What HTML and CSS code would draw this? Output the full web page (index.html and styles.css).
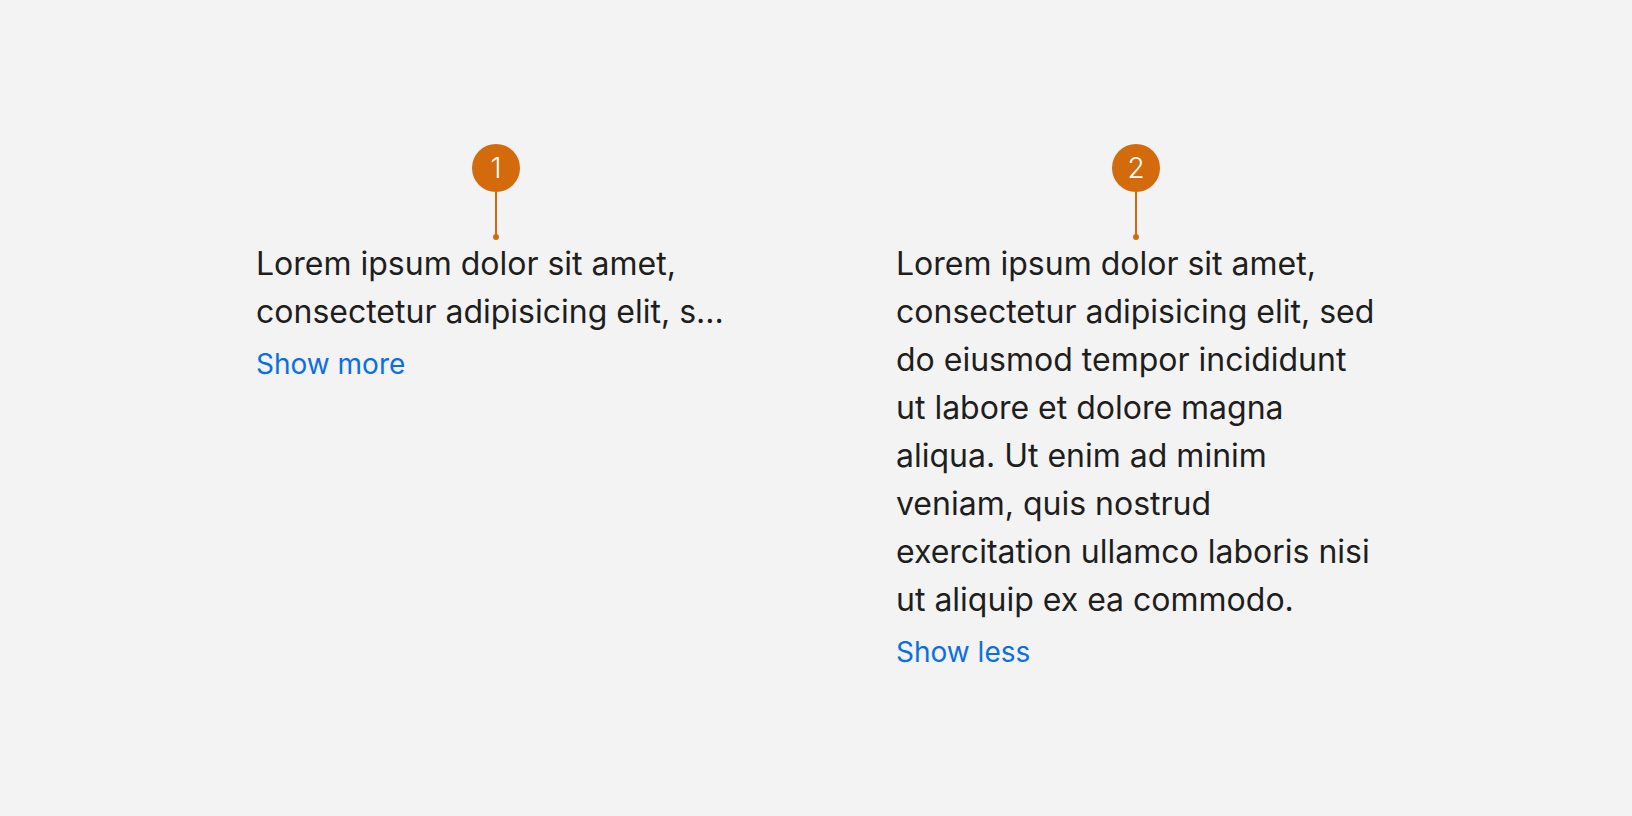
FILE: index.html
```html
<!DOCTYPE html>
<html lang="en">
<head>
<meta charset="utf-8">
<title>Show more / Show less</title>
<link rel="stylesheet" href="styles.css">
</head>
<body>
<main class="stage">
  <section class="example">
    <div class="marker">
      <span class="badge">1</span>
      <span class="stem"></span>
      <span class="dot"></span>
    </div>
    <p class="text">Lorem ipsum dolor sit amet,<br>consectetur adipisicing elit, s...</p>
    <a class="toggle" href="#">Show more</a>
  </section>
  <section class="example">
    <div class="marker">
      <span class="badge">2</span>
      <span class="stem"></span>
      <span class="dot"></span>
    </div>
    <p class="text">Lorem ipsum dolor sit amet, consectetur adipisicing elit, sed do eiusmod tempor incididunt ut labore et dolore magna aliqua. Ut enim ad minim veniam, quis nostrud exercitation ullamco laboris nisi ut aliquip ex ea commodo.</p>
    <a class="toggle" href="#">Show less</a>
  </section>
</main>
</body>
</html>
```

FILE: styles.css
```css
html, body {
  margin: 0;
  padding: 0;
  background: #f3f3f3;
}
body {
  font-family: Inter, "Noto Sans", sans-serif;
  color: #1e1e1e;
  width: 1632px;
  height: 816px;
  overflow: hidden;
}
.stage {
  display: flex;
  justify-content: center;
  gap: 160px;
  padding-top: 144px;
}
.example {
  width: 480px;
  display: flex;
  flex-direction: column;
  align-items: flex-start;
}
.marker {
  align-self: center;
  display: flex;
  flex-direction: column;
  align-items: center;
  height: 96px;
}
.badge {
  width: 48px;
  height: 48px;
  border-radius: 50%;
  background: #d36a0b;
  color: #ffffff;
  font-size: 28px;
  font-weight: 300;
  line-height: 48px;
  text-align: center;
}
.stem {
  width: 2px;
  height: 45px;
  background: #d36a0b;
}
.dot {
  width: 6px;
  height: 6px;
  border-radius: 50%;
  background: #d36a0b;
  margin-top: -3px;
}
.text {
  margin: 0;
  font-size: 32px;
  line-height: 48px;
}
.toggle {
  margin-top: 10px;
  font-size: 28px;
  line-height: 36px;
  color: #0b6fe3;
  text-decoration: none;
}
```
